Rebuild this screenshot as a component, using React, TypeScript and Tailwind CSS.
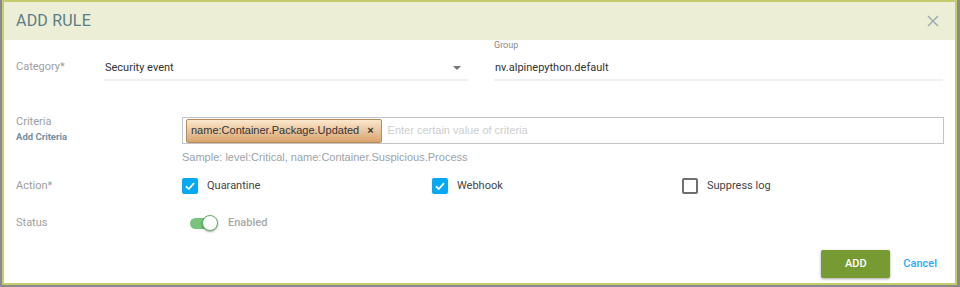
import React from "react";

const roboto = { fontFamily: "Roboto, 'Liberation Sans', sans-serif" };
const arial = { fontFamily: "'Liberation Sans', Arial, sans-serif" };

function Check({ checked, label }: { checked: boolean; label: string }) {
  return (
    <div className="flex w-[250px] items-center">
      {checked ? (
        <div className="flex h-[16px] w-[16px] items-center justify-center rounded-[2px] bg-[#03a9f4]">
          <svg width="12" height="12" viewBox="0 0 12 12">
            <polyline points="2,6.3 4.8,9 10,3.2" fill="none" stroke="#fff" strokeWidth="1.8" />
          </svg>
        </div>
      ) : (
        <div className="h-[16px] w-[16px] rounded-[2px] border-2 border-[#6f6f6f]" />
      )}
      <span className="ml-[9px] text-[11px] leading-[16px] text-[#444]" style={roboto}>
        {label}
      </span>
    </div>
  );
}

export default function App() {
  return (
    <div className="h-[287px] w-[960px] bg-[#8a8a8a] pb-[2px] pl-[2px] pr-[3px]" style={roboto}>
      <div className="flex h-[285px] w-[955px] flex-col border-2 border-[#c6cb6e] bg-white">
        {/* Header */}
        <div className="flex h-[38px] items-center justify-between bg-[#ecefd6] pl-[12px] pr-[16px]">
          <span className="text-[16px] tracking-[0.2px] text-[#5c7c89]">ADD RULE</span>
          <svg width="12" height="12" viewBox="0 0 12 12">
            <line x1="1" y1="1" x2="11" y2="11" stroke="#9aabb4" strokeWidth="1.5" />
            <line x1="11" y1="1" x2="1" y2="11" stroke="#9aabb4" strokeWidth="1.5" />
          </svg>
        </div>

        <div className="flex flex-col pl-[12px]">
          {/* Row 1 */}
          <div className="flex">
            <div className="w-[88px] pt-[19px] text-[11px] leading-[16px] text-[#9e9e9e]">Category*</div>
            <div className="flex w-[364px] items-center justify-between border-b-2 border-[#eef0f3] pb-[3px] pl-[1px] pr-[7px] pt-[20px]">
              <span className="text-[11px] leading-[16px] text-[#333]">Security event</span>
              <svg width="8" height="4" viewBox="0 0 8 4">
                <polygon points="0,0 8,0 4,4" fill="#777" />
              </svg>
            </div>
            <div className="ml-[26px] flex w-[449px] flex-col">
              <span className="text-[9px] leading-[10px] text-[#888]">Group</span>
              <div className="border-b-2 border-[#eef0f3] pb-[3px] pl-[1px] pt-[10px] text-[11px] leading-[16px] text-[#333]">
                nv.alpinepython.default
              </div>
            </div>
          </div>

          {/* Row 2 */}
          <div className="mt-[33px] flex">
            <div className="flex w-[166px] flex-col">
              <span className="text-[11px] leading-[16px] text-[#9e9e9e]">Criteria</span>
              <span className="text-[9.5px] font-bold leading-[14px] text-[#7390a2]">Add Criteria</span>
            </div>
            <div className="flex flex-col">
              <div className="mt-[3px] flex h-[27px] w-[762px] items-center border border-[#c4c4c4] pl-[3px]">
                <div
                  className="flex h-[24px] items-center rounded-[2px] border border-[#b78c5c] bg-gradient-to-b from-[#fbe8cd] to-[#d8a36d] pl-[4px] pr-[7px] text-[11px] text-[#333]"
                  style={arial}
                >
                  <span>name:Container.Package.Updated</span>
                  <span className="ml-[8px] text-[11px] font-bold">×</span>
                </div>
                <span className="ml-[6px] text-[11px] text-[#cdcdcd]" style={arial}>
                  Enter certain value of criteria
                </span>
              </div>
              <span className="mt-[5px] text-[11px] leading-[16px] text-[#9aa3a8]" style={arial}>
                Sample: level:Critical, name:Container.Suspicious.Process
              </span>
            </div>
          </div>

          {/* Row 3 */}
          <div className="mt-[13px] flex items-center">
            <div className="w-[166px] text-[11px] leading-[16px] text-[#9e9e9e]">Action*</div>
            <Check checked label="Quarantine" />
            <Check checked label="Webhook" />
            <Check checked={false} label="Suppress log" />
          </div>

          {/* Row 4 */}
          <div className="mt-[21px] flex items-center">
            <div className="w-[166px] text-[11px] leading-[16px] text-[#9e9e9e]">Status</div>
            <div className="ml-[8px] flex items-center">
              <div className="relative h-[16px] w-[28px]">
                <div className="absolute left-0 top-[3px] h-[11px] w-[26px] rounded-full bg-[#78c47c]" />
                <div className="absolute left-[12px] top-0 h-[16px] w-[16px] rounded-full border border-[#5fae63] bg-white shadow-[0_1px_2px_rgba(0,0,0,0.35)]" />
              </div>
              <span className="ml-[10px] text-[11px] font-medium leading-[16px] text-[#a8a8a8]">Enabled</span>
            </div>
          </div>
        </div>

        {/* Footer */}
        <div className="mt-[19px] flex items-center justify-end pr-[18px]">
          <div className="flex h-[28px] w-[69px] items-center justify-center rounded-[2px] bg-[#779a32] text-[11px] font-medium text-white shadow-[0_1px_3px_rgba(0,0,0,0.35)]">
            ADD
          </div>
          <span className="ml-[13px] text-[11px] font-medium text-[#2aabf2]">Cancel</span>
        </div>
      </div>
    </div>
  );
}
